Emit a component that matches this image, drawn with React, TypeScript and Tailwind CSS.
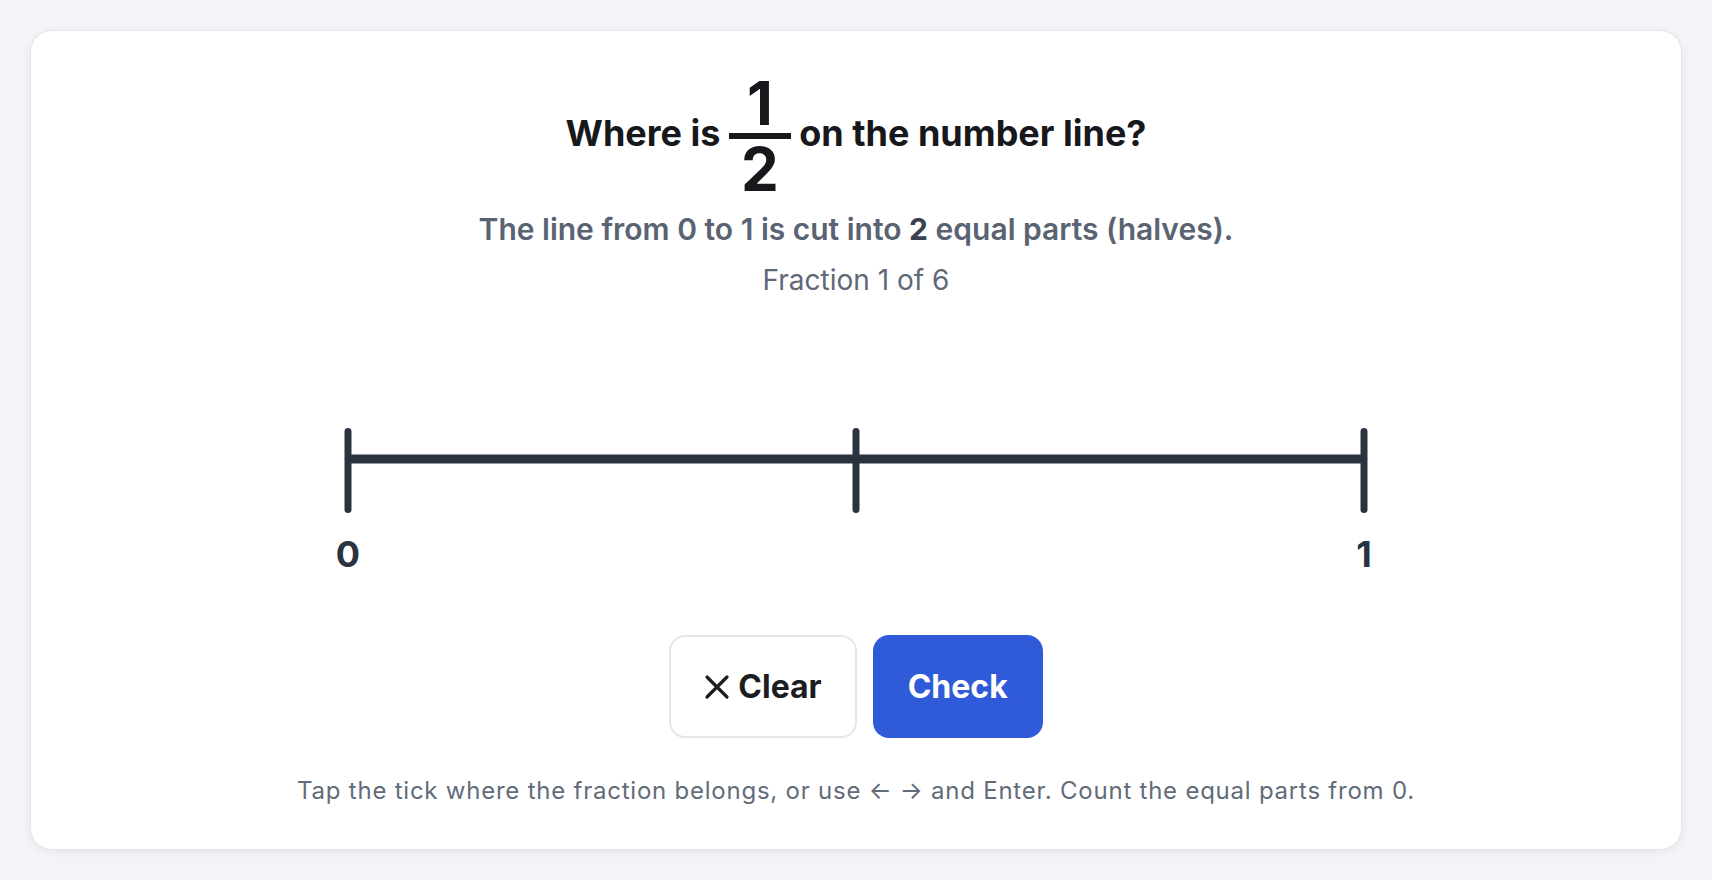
import { useState } from 'react';

const font = { fontFamily: 'Inter, "Liberation Sans", sans-serif' };

const ticks = [
  { x: 42, label: '0' },
  { x: 550, label: '' },
  { x: 1058, label: '1' },
];

function NumberLine({ selected, onSelect }: { selected: number | null; onSelect: (i: number) => void }) {
  return (
    <svg width="1100" height="185" viewBox="0 0 1100 185" className="block">
      <line x1="42" y1="60" x2="1058" y2="60" stroke="#2a3340" strokeWidth="9" />
      {ticks.map((t, i) => (
        <g key={i} onClick={() => onSelect(i)} className="cursor-pointer">
          <line
            x1={t.x}
            y1="32.5"
            x2={t.x}
            y2="110.5"
            stroke={selected === i ? '#2f5bd8' : '#2a3340'}
            strokeWidth="7"
            strokeLinecap="round"
          />
          {t.label && (
            <text
              x={t.x}
              y="168"
              textAnchor="middle"
              fontSize="36"
              fontWeight="700"
              fill="#2a3340"
              style={font}
            >
              {t.label}
            </text>
          )}
        </g>
      ))}
    </svg>
  );
}

export default function App() {
  const [selected, setSelected] = useState<number | null>(null);

  return (
    <div className="min-h-screen flex flex-col p-[30px] bg-[#f3f4f7]" style={font}>
      <div className="flex-1 flex flex-col items-center bg-white border border-[#e3e5e9] rounded-[22px] shadow-[0_2px_8px_rgba(16,24,40,0.06)] pt-[42px]">
        <h1 className="text-[36px] font-bold leading-[1.2] text-[#16181c] text-center">
          Where is{' '}
          <span className="inline-flex flex-col items-stretch align-middle">
            <span className="text-[60px] leading-none px-3 text-center">1</span>
            <span className="h-[6px] bg-[#16181c]"></span>
            <span className="text-[60px] leading-none px-3 text-center">2</span>
          </span>{' '}
          on the number line?
        </h1>

        <p className="mt-3 text-[30px] leading-9 font-semibold text-[#5a6372]">
          The line from 0 to 1 is cut into <span className="font-bold text-[#3a4250]">2</span> equal parts (halves).
        </p>

        <p className="mt-[17px] text-[28px] leading-8 text-[#5f6877]">Fraction 1 of 6</p>

        <div className="mt-[103px]">
          <NumberLine selected={selected} onSelect={setSelected} />
        </div>

        <div className="mt-[51px] flex gap-4">
          <button
            type="button"
            onClick={() => setSelected(null)}
            className="h-[103px] px-[33px] flex items-center gap-2 bg-white border-2 border-[#e4e6ea] rounded-2xl text-[32px] font-bold text-[#1b1d21]"
          >
            <svg width="26" height="26" viewBox="0 0 26 26" fill="none" stroke="#1b1d21" strokeWidth="3.2" strokeLinecap="round">
              <path d="M3 3 L23 23 M23 3 L3 23" />
            </svg>
            Clear
          </button>
          <button
            type="button"
            className="h-[103px] px-[35px] flex items-center bg-[#2f5bd8] rounded-2xl text-[32px] font-bold text-white"
          >
            Check
          </button>
        </div>

        <p className="mt-[37px] text-[24px] leading-[32px] tracking-[0.032em] text-[#626b79]">
          Tap the tick where the fraction belongs, or use ← → and Enter. Count the equal parts from 0.
        </p>
      </div>
    </div>
  );
}
